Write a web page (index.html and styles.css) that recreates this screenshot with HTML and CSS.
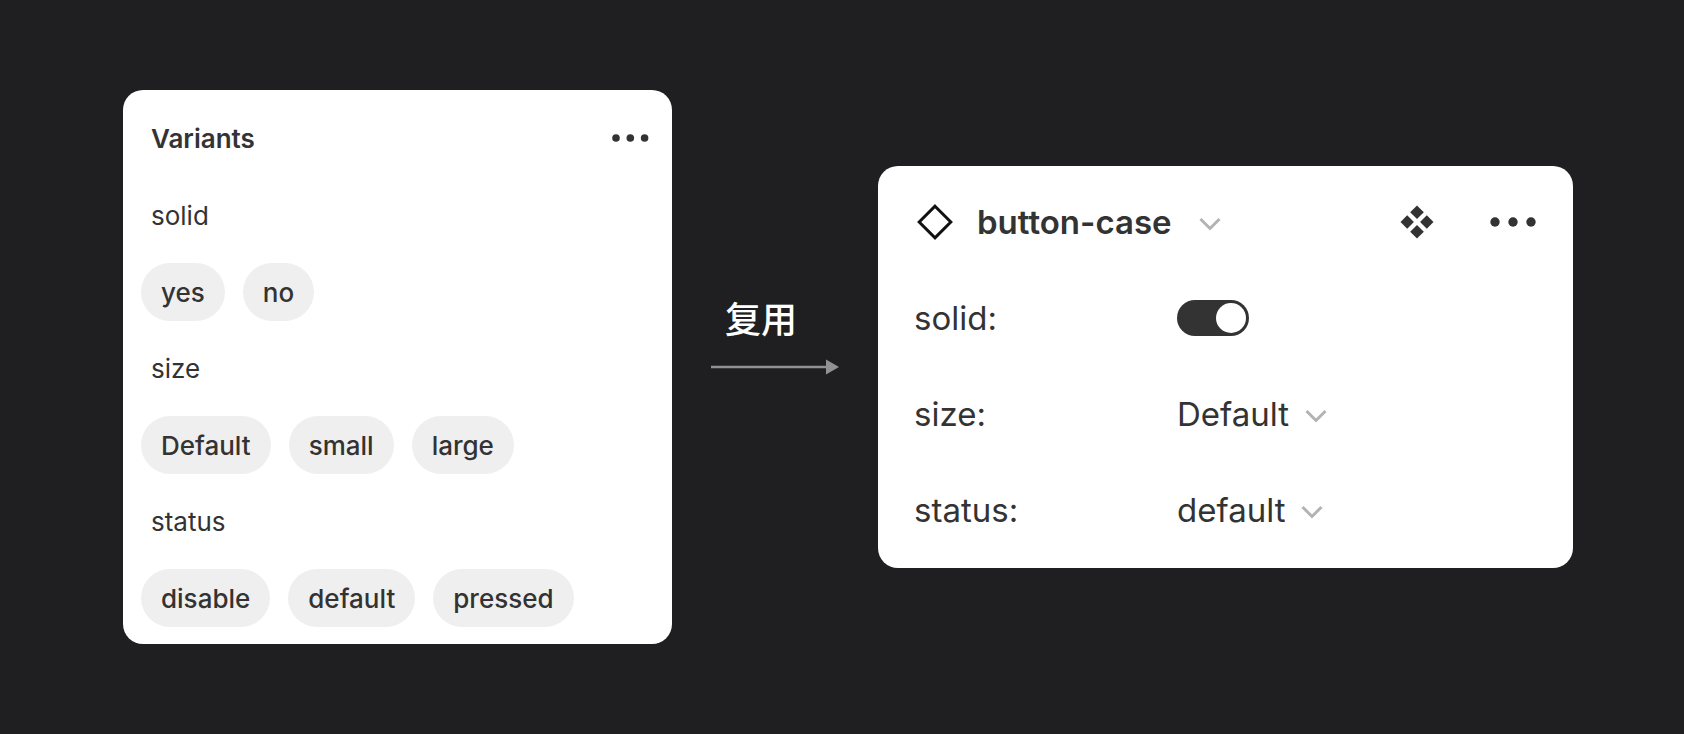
FILE: index.html
```html
<!DOCTYPE html>
<html lang="zh-CN">
<head>
    <meta charset="UTF-8">
    <meta name="viewport" content="width=device-width, initial-scale=1.0">
    <title>Variants</title>
    <link rel="stylesheet" href="styles.css">
</head>
<body>
    <main class="board">
        <section class="card variants">
            <div class="variants-header">
                <h2>Variants</h2>
                <button class="icon-btn" type="button" aria-label="More">
                    <svg width="38" height="10" viewBox="0 0 38 10" fill="#333">
                        <circle cx="5" cy="5" r="3.8"/>
                        <circle cx="19.3" cy="5" r="3.8"/>
                        <circle cx="33.6" cy="5" r="3.8"/>
                    </svg>
                </button>
            </div>

            <h3 class="prop-name">solid</h3>
            <div class="chips">
                <button class="chip" type="button">yes</button>
                <button class="chip" type="button">no</button>
            </div>

            <h3 class="prop-name">size</h3>
            <div class="chips">
                <button class="chip" type="button">Default</button>
                <button class="chip" type="button">small</button>
                <button class="chip" type="button">large</button>
            </div>

            <h3 class="prop-name">status</h3>
            <div class="chips">
                <button class="chip" type="button">disable</button>
                <button class="chip" type="button">default</button>
                <button class="chip" type="button">pressed</button>
            </div>
        </section>

        <div class="flow">
            <p class="flow-label">复用</p>
            <svg class="flow-arrow" width="128" height="16" viewBox="0 0 128 16">
                <path d="M0 8h116" stroke="#919193" stroke-width="2.4"/>
                <path d="M115 0.5 128 8 115 15.5z" fill="#919193"/>
            </svg>
        </div>

        <section class="card instance">
            <div class="instance-header">
                <svg class="diamond" width="38" height="38" viewBox="0 0 38 38" fill="none" stroke="#111" stroke-width="3">
                    <path d="M19 3.2 34.8 19 19 34.8 3.2 19z"/>
                </svg>
                <button class="name-btn" type="button">
                    <span>button-case</span>
                    <svg class="chevron" width="22" height="14" viewBox="0 0 22 14" fill="none" stroke="#b3b3b3" stroke-width="3">
                        <path d="M1.5 2 11 11.5 20.5 2"/>
                    </svg>
                </button>
                <div class="actions">
                    <button class="icon-btn" type="button" aria-label="Go to main component">
                        <svg width="34" height="34" viewBox="0 0 34 34" fill="#333">
                            <path d="M17 0.5 23.8 7.2 17 13.9 10.2 7.2z"/>
                            <path d="M7.2 10.2 13.9 17 7.2 23.8 0.5 17z"/>
                            <path d="M26.8 10.2 33.5 17 26.8 23.8 20.1 17z"/>
                            <path d="M17 20.1 23.8 26.8 17 33.5 10.2 26.8z"/>
                        </svg>
                    </button>
                    <button class="icon-btn" type="button" aria-label="More">
                        <svg width="46" height="10" viewBox="0 0 46 10" fill="#333">
                            <circle cx="5" cy="5" r="4.7"/>
                            <circle cx="23" cy="5" r="4.7"/>
                            <circle cx="41" cy="5" r="4.7"/>
                        </svg>
                    </button>
                </div>
            </div>

            <div class="field">
                <label for="solid">solid:</label>
                <input class="switch" type="checkbox" role="switch" id="solid" checked>
            </div>
            <div class="field">
                <label for="size">size:</label>
                <div class="select-wrap">
                    <select id="size">
                        <option selected>Default</option>
                        <option>small</option>
                        <option>large</option>
                    </select>
                    <svg class="chevron" width="22" height="14" viewBox="0 0 22 14" fill="none" stroke="#b3b3b3" stroke-width="3">
                        <path d="M1.5 2 11 11.5 20.5 2"/>
                    </svg>
                </div>
            </div>
            <div class="field">
                <label for="status">status:</label>
                <div class="select-wrap">
                    <select id="status">
                        <option>disable</option>
                        <option selected>default</option>
                        <option>pressed</option>
                    </select>
                    <svg class="chevron" width="22" height="14" viewBox="0 0 22 14" fill="none" stroke="#b3b3b3" stroke-width="3">
                        <path d="M1.5 2 11 11.5 20.5 2"/>
                    </svg>
                </div>
            </div>
        </section>
    </main>
</body>
</html>
```
FILE: styles.css
```css
* {
    margin: 0;
    padding: 0;
    box-sizing: border-box;
}

body {
    font-family: Inter, "Noto Sans CJK SC", sans-serif;
    background: #1f1f21;
    color: #333;
}

button, select {
    font: inherit;
    color: inherit;
    border: none;
    background: none;
    cursor: pointer;
}

svg {
    display: block;
    flex: none;
}

.board {
    min-height: 100vh;
    padding: 20px 111px 20px 123px;
    display: grid;
    grid-template-columns: 549fr 128px 695fr;
    gap: 39px;
    align-items: center;
}

.card {
    background: white;
    border-radius: 20px;
}

/* Variants panel */
.variants {
    padding: 9px 18px 8px;
    font-size: 26px;
}

.variants-header {
    display: flex;
    align-items: center;
    justify-content: space-between;
    height: 78px;
    padding: 0 5px 0 10px;
}

.variants-header h2 {
    font-size: 26px;
    font-weight: 600;
}

.prop-name {
    padding-left: 10px;
    font-size: 26px;
    font-weight: 400;
    line-height: 77px;
}

.chips {
    display: flex;
    align-items: center;
    gap: 18px;
    height: 76px;
}

.chip {
    height: 58px;
    padding: 0 20px;
    border-radius: 29px;
    background: #efefef;
    font-weight: 500;
}

/* Arrow between the panels */
.flow {
    display: grid;
    grid-template-rows: 1fr auto 1fr;
}

.flow-label {
    padding-left: 14px;
    color: white;
    font-family: "Noto Sans CJK SC", sans-serif;
    font-size: 36px;
    font-weight: 500;
    line-height: 84px;
}

/* Instance panel */
.instance {
    padding: 8px 36px 10px;
    font-size: 33px;
}

.instance-header {
    display: flex;
    align-items: center;
    height: 96px;
    padding: 0 1px 0 2px;
}

.name-btn {
    display: flex;
    align-items: center;
    gap: 27px;
    margin-left: 23px;
    font-weight: 600;
}

.name-btn .chevron,
.select-wrap .chevron {
    margin-top: 3px;
}

.actions {
    display: flex;
    align-items: center;
    gap: 56px;
    margin-left: auto;
}

.field {
    display: grid;
    grid-template-columns: 263px 1fr;
    align-items: center;
    height: 96px;
}

.select-wrap {
    display: flex;
    align-items: center;
    gap: 16px;
}

select {
    appearance: none;
    field-sizing: content;
}

.switch {
    appearance: none;
    width: 72px;
    height: 36px;
    padding: 3px;
    border-radius: 18px;
    background: #333;
    cursor: pointer;
}

.switch::before {
    content: "";
    display: block;
    width: 30px;
    height: 30px;
    border-radius: 50%;
    background: white;
}

.switch:checked::before {
    margin-left: auto;
}
```
